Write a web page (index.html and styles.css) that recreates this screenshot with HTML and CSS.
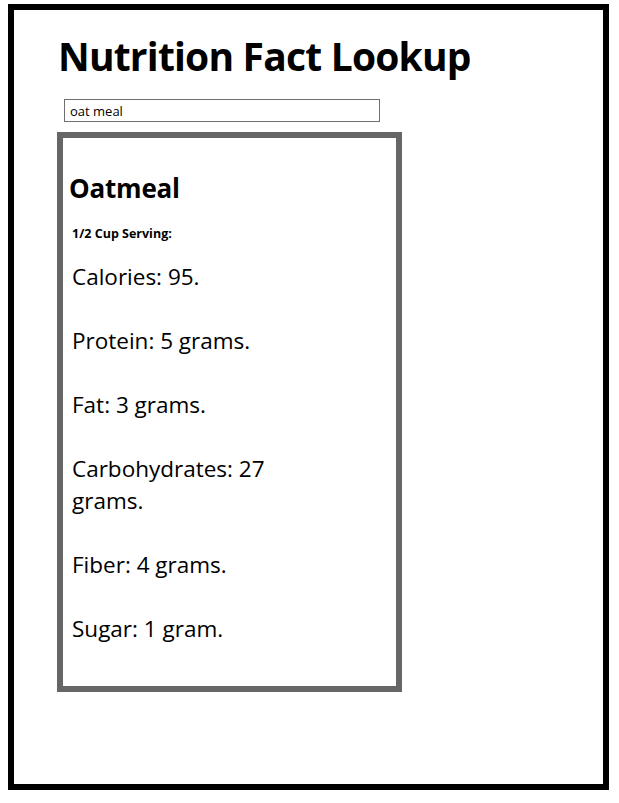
FILE: index.html
```html
<!DOCTYPE html>
<html lang="en">
<head>
<meta charset="utf-8">
<title>Nutrition Fact Lookup</title>
<link rel="stylesheet" href="styles.css">
</head>
<body>
<div class="frame">
  <h1 class="title">Nutrition Fact Lookup</h1>
  <input class="search" type="text" value="oat meal">
  <section class="card">
    <h2 class="food">Oatmeal</h2>
    <h4 class="serving">1/2 Cup Serving:</h4>
    <div class="facts">
      <p class="fact">Calories: 95.</p>
      <p class="fact">Protein: 5 grams.</p>
      <p class="fact">Fat: 3 grams.</p>
      <p class="fact">Carbohydrates: 27 grams.</p>
      <p class="fact">Fiber: 4 grams.</p>
      <p class="fact">Sugar: 1 gram.</p>
    </div>
  </section>
</div>
</body>
</html>
```

FILE: styles.css
```css
html, body {
  background: #fff;
}
body {
  margin: 4px 0 0 8px;
  font-family: "Open Sans", "Noto Sans", sans-serif;
  color: #000;
}
.frame {
  box-sizing: border-box;
  width: 601px;
  height: 786px;
  border: 6px solid #000;
  padding: 22px 0 0 43px;
  display: flex;
  flex-direction: column;
  align-items: flex-start;
}
.title {
  margin: 0 0 0 1px;
  font-size: 39px;
  line-height: 48px;
  font-weight: 700;
  letter-spacing: -0.8px;
}
.search {
  box-sizing: border-box;
  margin: 19px 0 0 7px;
  width: 316px;
  height: 23px;
  border: 1px solid #707070;
  padding: 0 5px;
  font-family: inherit;
  font-size: 13px;
  color: #000;
  outline: none;
}
.card {
  box-sizing: border-box;
  margin-top: 10px;
  width: 345px;
  height: 560px;
  border: 6px solid #666;
  padding: 34px 0 0 6px;
  display: flex;
  flex-direction: column;
}
.food {
  margin: 0;
  font-size: 26px;
  line-height: 32px;
  font-weight: 700;
  letter-spacing: -0.2px;
}
.serving {
  margin: 22px 0 0 3px;
  font-size: 12.5px;
  line-height: 16px;
  font-weight: 700;
}
.facts {
  margin: 19px 0 0 3px;
  width: 240px;
}
.fact {
  margin: 0 0 32px;
  font-size: 22.5px;
  line-height: 32px;
  font-weight: 400;
}
```
